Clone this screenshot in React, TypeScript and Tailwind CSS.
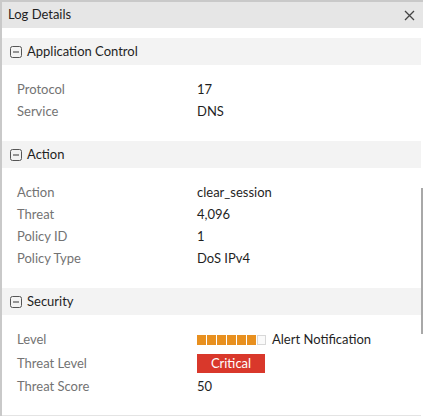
import React from "react";

type Row = { label: string; value: React.ReactNode };

function MinusBox() {
  return (
    <svg width="12" height="12" viewBox="0 0 12 12" className="shrink-0">
      <rect x="0.5" y="0.5" width="11" height="11" rx="2" fill="none" stroke="#555" strokeWidth="1" />
      <line x1="3" y1="6" x2="9" y2="6" stroke="#555" strokeWidth="1.2" />
    </svg>
  );
}

function LevelBar() {
  return (
    <div className="flex items-center">
      <div className="flex gap-[1px]">
        {[0, 1, 2, 3, 4, 5].map((i) => (
          <div key={i} className="w-[9px] h-[10px] bg-[#e8901f]" />
        ))}
        <div className="w-[9px] h-[10px] border border-[#d8d8d8] bg-[#fafafa]" />
      </div>
      <span className="ml-[6px]">Alert Notification</span>
    </div>
  );
}

function Section({ title, rows, last }: { title: string; rows: Row[]; last?: boolean }) {
  return (
    <div className={last ? "" : "mb-[19px]"}>
      <div className="flex items-center gap-[5px] h-[27px] bg-[#f3f3f3] pl-[8px] text-[13px] text-[#1f1f1f]">
        <MinusBox />
        <span>{title}</span>
      </div>
      <div className="pt-[14px]">
        {rows.map((r) => (
          <div key={r.label} className="flex items-center min-h-[21.7px] text-[13px]">
            <div className="w-[195px] pl-[15px] text-[#737373]">{r.label}</div>
            <div className="text-[#1f1f1f]">{r.value}</div>
          </div>
        ))}
      </div>
    </div>
  );
}

export default function App() {
  return (
    <div
      className="w-[423px] h-[416px] overflow-hidden bg-white border-l-2 border-t-2 border-[#c9c9c9] relative"
      style={{ fontFamily: "Lato, 'Open Sans', sans-serif" }}
    >
      <div className="flex items-center justify-between h-[26px] bg-[#e6e6e6] pl-[6px] pr-[8px]">
        <span className="text-[13px] text-[#1f1f1f]">Log Details</span>
        <svg width="11" height="11" viewBox="0 0 11 11">
          <path d="M1 1 L10 10 M10 1 L1 10" stroke="#444" strokeWidth="1.3" />
        </svg>
      </div>
      <div className="pt-[10px] pr-[2px]">
        <Section
          title="Application Control"
          rows={[
            { label: "Protocol", value: "17" },
            { label: "Service", value: "DNS" },
          ]}
        />
        <Section
          title="Action"
          rows={[
            { label: "Action", value: "clear_session" },
            { label: "Threat", value: "4,096" },
            { label: "Policy ID", value: "1" },
            { label: "Policy Type", value: "DoS IPv4" },
          ]}
        />
        <Section
          title="Security"
          last
          rows={[
            { label: "Level", value: <LevelBar /> },
            {
              label: "Threat Level",
              value: (
                <div className="w-[68px] h-[19px] my-[3px] bg-[#d9382b] text-white text-[13px] flex items-center justify-center">
                  Critical
                </div>
              ),
            },
            { label: "Threat Score", value: "50" },
          ]}
        />
        <div className="mt-[17px] border-b border-[#e4e4e4]" />
      </div>
      <div className="absolute right-0 top-[186px] w-[2px] h-[146px] bg-[#a8a8a8]" />
    </div>
  );
}
